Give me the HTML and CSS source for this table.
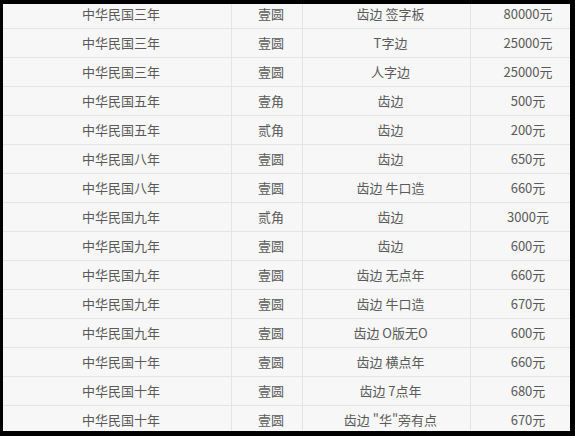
FILE: index.html
```html
<!DOCTYPE html>
<html lang="zh">
<head>
<meta charset="utf-8">
<link rel="stylesheet" href="styles.css">
</head>
<body>
<div class="frame">
  <table class="coins">
    <colgroup>
      <col class="c1"><col class="c2"><col class="c3"><col class="c4">
    </colgroup>
    <tbody>
      <tr><td>中华民国三年</td><td>壹圆</td><td>齿边 签字板</td><td>80000元</td></tr>
      <tr><td>中华民国三年</td><td>壹圆</td><td>T字边</td><td>25000元</td></tr>
      <tr><td>中华民国三年</td><td>壹圆</td><td>人字边</td><td>25000元</td></tr>
      <tr><td>中华民国五年</td><td>壹角</td><td>齿边</td><td>500元</td></tr>
      <tr><td>中华民国五年</td><td>贰角</td><td>齿边</td><td>200元</td></tr>
      <tr><td>中华民国八年</td><td>壹圆</td><td>齿边</td><td>650元</td></tr>
      <tr><td>中华民国八年</td><td>壹圆</td><td>齿边 牛口造</td><td>660元</td></tr>
      <tr><td>中华民国九年</td><td>贰角</td><td>齿边</td><td>3000元</td></tr>
      <tr><td>中华民国九年</td><td>壹圆</td><td>齿边</td><td>600元</td></tr>
      <tr><td>中华民国九年</td><td>壹圆</td><td>齿边 无点年</td><td>660元</td></tr>
      <tr><td>中华民国九年</td><td>壹圆</td><td>齿边 牛口造</td><td>670元</td></tr>
      <tr><td>中华民国九年</td><td>壹圆</td><td>齿边 O版无O</td><td>600元</td></tr>
      <tr><td>中华民国十年</td><td>壹圆</td><td>齿边 横点年</td><td>660元</td></tr>
      <tr><td>中华民国十年</td><td>壹圆</td><td>齿边 7点年</td><td>680元</td></tr>
      <tr><td>中华民国十年</td><td>壹圆</td><td>齿边 "华"旁有点</td><td>670元</td></tr>
    </tbody>
  </table>
</div>
</body>
</html>
```

FILE: styles.css
```css
html, body {
  margin: 0;
  padding: 0;
  background: #000;
}
body {
  width: 575px;
  height: 436px;
  overflow: hidden;
}
.frame {
  margin: 4px 5px 0 3px;
  width: 567px;
  height: 427px;
  overflow: hidden;
  background: #f7f7f7;
}
.coins {
  margin-top: -4px;
  border-collapse: separate;
  border-spacing: 0;
  table-layout: fixed;
  width: 575px;
  font-family: "Noto Sans CJK SC", "Noto Sans", sans-serif;
  font-size: 13px;
  color: #5a5a5a;
  background: #f7f7f7;
}
.c1 { width: 229px; }
.c2 { width: 71px; }
.c3 { width: 168px; }
.c4 { width: 107px; }
.coins td {
  height: 28px;
  padding: 0 0 0 8px;
  text-align: center;
  vertical-align: middle;
  border-bottom: 1px solid #e4e4e4;
  border-right: 1px solid #e4e4e4;
  white-space: nowrap;
  line-height: 28px;
}
```
